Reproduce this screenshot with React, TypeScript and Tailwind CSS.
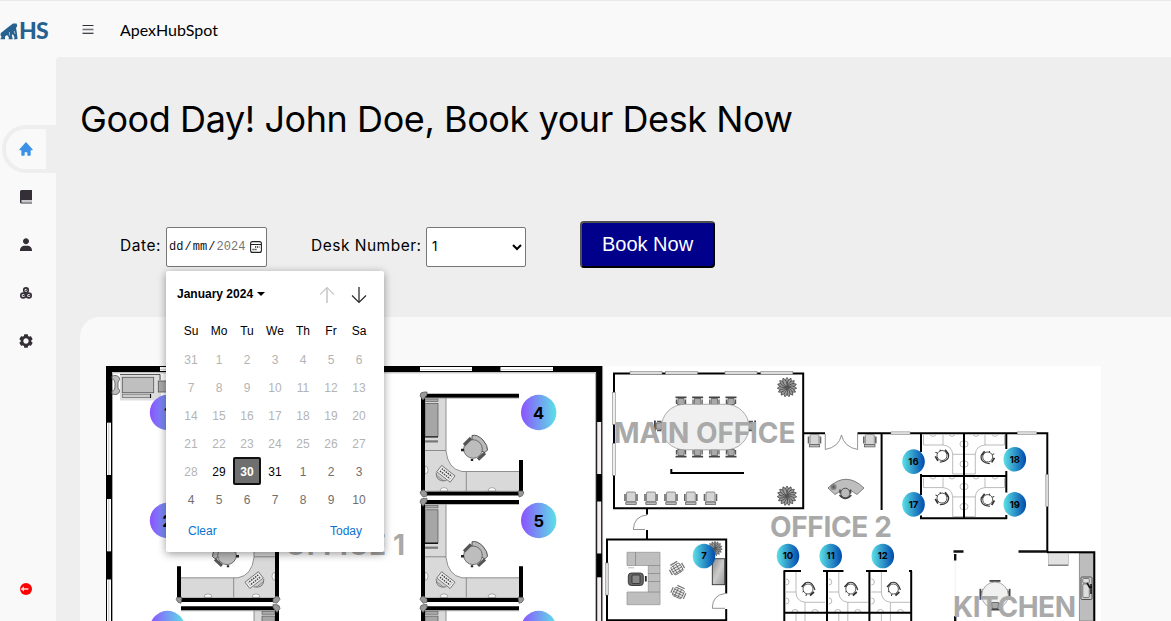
import React from "react";
import { BiSolidHome, BiSolidUser, BiSolidCog } from "react-icons/bi";

const GREY = "#a9a9a9";

function Chair({ x, y, r = 0 }: { x: number; y: number; r?: number }) {
  return (
    <g transform={`translate(${x} ${y}) rotate(${r})`}>
      <path d="M-1 -13.5 Q4 -15 10 -9 Q15 -3 14.5 1 L12 3.5 L8.5 2 Q9 -5 -1 -9Z" fill="#b9b9b9" stroke="#444" strokeWidth="0.9" />
      <circle r="9.3" fill="#bdbdbd" stroke="#555" strokeWidth="0.8" />
      <path d="M-9 -4 L-2 -11" stroke="#555" strokeWidth="3.2" />
      <path d="M5 10.5 L12 4" stroke="#555" strokeWidth="3.2" />
      <path d="M-12 1 l3 0 M-1 12 l0 -2" stroke="#222" strokeWidth="2.4" />
    </g>
  );
}

function Keyboard({ x, y }: { x: number; y: number }) {
  return (
    <g transform={`translate(${x} ${y}) rotate(38)`}>
      <path d="M-8 -4 H9 V4 H-8Z" fill="#eee" stroke="#666" strokeWidth="0.8" />
      <path d="M-6 -1.6 H7 M-6 1.4 H7" stroke="#444" strokeWidth="1.5" strokeDasharray="1.5 1" />
      <path d="M-8 5 Q-2 13 5 5" fill="#ccc" stroke="#777" strokeWidth="0.9" />
      <path d="M-6 7 H3" stroke="#777" strokeWidth="0.7" />
    </g>
  );
}

function Cubicle({ dy = 0, mirror = false }: { dy?: number; mirror?: boolean }) {
  return (
    <g transform={mirror ? `translate(700 ${dy}) scale(-1 1)` : `translate(0 ${dy})`}>
      <path d="M425 398 H446 V451 Q448 469 462 471.5 H519 V491 H425Z" fill="#d9d9d9" />
      <path d="M446 398 V451 Q448 469 462 471.5 H519 M425 450.5 H446 M466.3 471.5 V491" fill="none" stroke="#777" strokeWidth="0.8" />
      <rect x="425" y="399" width="13" height="2.6" fill="#aaa" stroke="#555" strokeWidth="0.6" />
      <rect x="425" y="403.5" width="13" height="33" fill="#a6a6a6" stroke="#555" strokeWidth="0.7" />
      <path d="M425 437 H438" stroke="#000" strokeWidth="1.2" />
      <rect x="421" y="440.3" width="17" height="2.2" fill="#777" />
      <path d="M440 491 a4 3.4 0 0 1 8 0Z M488 491 a4 3.4 0 0 1 8 0Z M425 466 a3 4 0 0 1 0 8Z" fill="#fff" stroke="#777" strokeWidth="0.6" />
      <Keyboard x={445.5} y={473.5} />
      <Chair x={473} y={449} />
      <path d="M424 395.7 H519 M423 396 V493 M424 493.6 H521 M521 460 V493" stroke="#000" strokeWidth="4" />
      <path d="M424 398.2 H519 M424 491.2 H519" stroke="#777" strokeWidth="0.5" />
      <path d="M420 396 q0 -4 4 -4 h3 v3 l-4 5Z M420 493 q0 -3 4 -3 l3 3 v3 l-4 1Z M518 491 h5 q2 2 -1 5 l-3 1Z" fill="#999" stroke="#555" strokeWidth="0.7" />
    </g>
  );
}

function Plant({ x, y, s = 1 }: { x: number; y: number; s?: number }) {
  const leaves = Array.from({ length: 15 }, (_, i) => i * 24);
  return (
    <g transform={`translate(${x} ${y}) scale(${s})`}>
      {leaves.map((a) => (
        <path key={a} d="M0 0 Q-3.4 -6 0 -9.8 Q3.4 -6 0 0Z" transform={`rotate(${a})`} fill="#9c9c9c" stroke="#3c3c3c" strokeWidth="0.7" />
      ))}
      <circle r="1.5" fill="#555" />
    </g>
  );
}

function Seat({ x, y, r = 0 }: { x: number; y: number; r?: number }) {
  return (
    <g transform={`translate(${x} ${y}) rotate(${r})`}>
      <path d="M-5.5 -3.6 H5.5" stroke="#444" strokeWidth="1.8" />
      <path d="M-3 -2.5 H3 L3.5 3.5 H-3.5Z" fill="#aaa" stroke="#555" strokeWidth="0.8" />
      <path d="M-4.6 -1.5 V3 M4.6 -1.5 V3" stroke="#555" strokeWidth="1.2" />
    </g>
  );
}

function Armchair({ x, y }: { x: number; y: number }) {
  return (
    <g transform={`translate(${x} ${y})`}>
      <rect x="-4.5" y="-6" width="9" height="10" rx="1" fill="#d5d5d5" stroke="#777" strokeWidth="0.8" />
      <path d="M-6 -4 V3 M6 -4 V3" stroke="#666" strokeWidth="1.6" />
      <rect x="-5.2" y="4" width="10.4" height="2.4" fill="#bbb" stroke="#555" strokeWidth="0.7" />
    </g>
  );
}

function LineChair({ x, y, r = 0 }: { x: number; y: number; r?: number }) {
  return (
    <g transform={`translate(${x} ${y}) rotate(${r})`} fill="#fff" stroke="#333">
      <path d="M-3 -6 Q4 -9 7 1" strokeWidth="1.1" />
      <circle r="5" strokeWidth="0.8" />
      <path d="M-6.3 -2 L-2.5 -6 M2 6.5 L6 3" strokeWidth="1.7" />
      <path d="M-5.5 3 l1.5 -.8 M-2 7 l.5 -2" strokeWidth="1" />
    </g>
  );
}

function LowerDesk({ x }: { x: number }) {
  return (
    <g fill="none" stroke="#aaa" strokeWidth="0.8">
      <path d={`M${x + 12} 572 V592 H${x + 2} M${x + 12} 592 Q${x + 12} 601 ${x + 21} 602.3 H${x + 41} M${x + 21} 602.3 V612 M${x + 21} 614 V621 M${x + 12} 614 V621`} />
      <path d={`M${x + 2} 579 a3 3 0 0 1 0 6 M${x + 2} 598 a3 3 0 0 1 0 6 M${x + 8} 612 a3 2.5 0 0 1 6 0 M${x + 28} 612 a3 2.5 0 0 1 6 0`} />
      <LineChair x={x + 24} y={589} />
    </g>
  );
}

function UpperDesk({ dy, mirror = false }: { dy: number; mirror?: boolean }) {
  return (
    <g transform={mirror ? `translate(1928 ${dy}) scale(-1 1)` : `translate(0 ${dy})`} fill="none" stroke="#aaa" strokeWidth="0.8">
      <path d="M923.5 435 V445 H943 V435 M943 445 Q952 446 952.7 454.3 H963 M952.7 454.3 V474 H963" />
      <path d="M930 435 q3 3 6 0 M949 435 q3 3 6 0 M963 441 a3 3 0 0 0 0 6 M963 461 a3 3 0 0 0 0 6" />
      {mirror ? <LineChair x={940.3} y={457} r={100} /> : <LineChair x={942} y={455.5} r={100} />}
    </g>
  );
}

function HatchChair({ x, y, r }: { x: number; y: number; r: number }) {
  return (
    <g transform={`translate(${x} ${y}) rotate(${r})`}>
      <rect x="-5" y="-4.5" width="10" height="9" rx="1.5" fill="#eee" stroke="#666" strokeWidth="0.8" />
      <path d="M-5 -2 H5 M-5 0.5 H5 M-5 3 H5 M-2 -4.5 V4.5 M1.5 -4.5 V4.5" stroke="#555" strokeWidth="0.7" />
      <path d="M-4 -6.5 H4 M-7 -3 V3 M7 -3 V3" stroke="#777" strokeWidth="1.2" />
    </g>
  );
}

function Label({ x, y, w, children }: { x: number; y: number; w: number; children: string }) {
  return (
    <text x={x} y={y} textLength={w} fontSize="28" fontWeight="700" fill={GREY} fontFamily="Inter, sans-serif">
      {children}
    </text>
  );
}

const bigDesks = [
  { n: 1, x: 167.5, y: 412.5 },
  { n: 2, x: 167.5, y: 520.5 },
  { n: 3, x: 167.5, y: 628.5 },
  { n: 4, x: 538.7, y: 412.5 },
  { n: 5, x: 538.7, y: 520.5 },
  { n: 6, x: 538.7, y: 628.5 },
];
const smallDesks = [
  { n: 7, x: 704, y: 556 },
  { n: 10, x: 788, y: 556 },
  { n: 11, x: 830.7, y: 556 },
  { n: 12, x: 882.8, y: 556 },
  { n: 16, x: 913.5, y: 461.6 },
  { n: 17, x: 913.5, y: 504.4 },
  { n: 18, x: 1014.8, y: 459.2 },
  { n: 19, x: 1014.8, y: 504.4 },
];

function FloorPlan() {
  return (
    <svg width="995" height="255" viewBox="106 366 995 255" className="block bg-white">
      <defs>
        <linearGradient id="violet">
          <stop offset="0" stopColor="#8c52ff" />
          <stop offset="1" stopColor="#5ce1e6" />
        </linearGradient>
        <linearGradient id="ocean">
          <stop offset="0" stopColor="#5ce1e6" />
          <stop offset="1" stopColor="#004aad" />
        </linearGradient>
        <linearGradient id="steel" x2="1" y2="1">
          <stop offset="0" stopColor="#888" />
          <stop offset="0.5" stopColor="#ccc" />
          <stop offset="1" stopColor="#999" />
        </linearGradient>
      </defs>

      <path d="M109 625 V369 H599.2 V625" fill="none" stroke="#000" strokeWidth="6.2" />
      <path d="M112.5 621 V372.8 H595.6 V621 M602.6 366 V621" fill="none" stroke="#888" strokeWidth="0.7" />
      {[[160, 52], [420, 52], [500.5, 52.5]].map(([x, w]) => (
        <g key={x}>
          <rect x={x} y="367" width={w} height="4" fill="#fff" />
          <path d={`M${x} 369.5 h${w}`} stroke="#ccc" strokeWidth="0.8" />
        </g>
      ))}
      {[[422.7, 52.3], [499, 52.3], [579.5, 50]].map(([y, h]) => (
        <g key={y}>
          <rect x="107" y={y} width="4" height={h} fill="#fff" />
          <path d={`M108.8 ${y} v${h}`} stroke="#aaa" strokeWidth="0.7" />
        </g>
      ))}
      {[[422, 52], [501.5, 52], [577.3, 50]].map(([y, h]) => (
        <rect key={y} x="597.2" y={y} width="4" height={h} fill="#f3eeee" />
      ))}

      <path d="M112 376 q6 -2 8 3 l-2 3 v6 l2 3 q-2 5 -8 3 l0 -3 q3 0 3 -6 q0 -6 -3 -6Z" fill="#bbb" stroke="#555" strokeWidth="0.8" />
      <rect x="120" y="374.5" width="41" height="26" fill="#ddd" />
      <path d="M120 374.5 H160 V380" fill="none" stroke="#333" strokeWidth="0.8" />
      <rect x="122.3" y="377.3" width="31.4" height="15.4" fill="#bfbfbf" stroke="#555" strokeWidth="0.8" />
      <rect x="122.3" y="394.2" width="28" height="3.4" fill="#ccc" stroke="#666" strokeWidth="0.7" />
      <path d="M150.6 394 v4" stroke="#000" strokeWidth="1" />
      <rect x="158.3" y="381" width="10" height="11" fill="#aaa" stroke="#555" strokeWidth="0.8" />

      <Label x={285} y={555.3} w={120}>OFFICE 1</Label>
      <Cubicle />
      <Cubicle dy={106.3} />
      <Cubicle dy={212.6} />
      <Cubicle dy={106.3} mirror />
      <Cubicle dy={212.6} mirror />

      <path d="M614 373.4 H803.2 V508.3 H614Z" fill="none" stroke="#000" strokeWidth="2" />
      {[630, 665.5, 725, 760.8].map((x) => (
        <rect key={x} x={x} y="371.3" width="32" height="3" fill="#ddd" stroke="#888" strokeWidth="0.6" />
      ))}
      {[392.3, 443.3].map((y) => (
        <rect key={y} x="612.3" y={y} width="3" height="32" fill="#eee" stroke="#888" strokeWidth="0.6" />
      ))}
      {[681, 697.6, 714.4, 731].map((x) => (
        <g key={x}>
          <Seat x={x} y={401} />
          <Seat x={x} y={453} r={180} />
        </g>
      ))}
      <Seat x={658.5} y={426} r={-90} />
      <Seat x={751.5} y={426} r={90} />
      <rect x="661.5" y="404.3" width="87.5" height="45.5" rx="23" fill="#f0f0f0" stroke="#999" strokeWidth="0.8" />
      <Label x={613.5} y={443} w={182}>MAIN OFFICE</Label>
      <path d="M671.3 469 V473 H744" fill="none" stroke="#000" strokeWidth="2" />
      <Plant x={787} y={387.2} />
      <Plant x={787} y={495.8} />
      {[631, 651, 671, 690.8, 710.5].map((x) => (
        <Armchair key={x} x={x} y={498} />
      ))}

      <path d="M647 509 V514.5 M647 530 V539" stroke="#000" strokeWidth="2" />
      <path d="M647 515 Q634 516 633.3 529.5 H645" fill="none" stroke="#777" strokeWidth="0.8" />
      <path d="M726.2 593.5 V539.5 H607 V620.2 H726.2 V609" fill="none" stroke="#000" strokeWidth="2" />
      <rect x="605.5" y="563" width="3" height="32" fill="#ddd" stroke="#888" strokeWidth="0.6" />
      <path d="M725 593.5 Q712.5 595 712.3 608.3 H725" fill="none" stroke="#777" strokeWidth="0.8" />
      <path d="M627 552.3 H660 V604.7 H627 V592 H648.3 V565.5 H627Z" fill="#bebebe" stroke="#999" strokeWidth="0.8" />
      <path d="M635.5 552 V565.5 M648.3 565.5 H660 M648.3 573.5 H660 M648.3 581.5 H660 M648.3 592 H660" stroke="#888" strokeWidth="0.8" />
      <path d="M628 567.8 H634" stroke="#bbb" strokeWidth="1" />
      <rect x="628.3" y="573" width="15" height="12.5" rx="3" fill="#666" stroke="#333" strokeWidth="0.9" />
      <rect x="632" y="575" width="8" height="8.5" rx="1" fill="#888" stroke="#222" strokeWidth="0.7" />
      <path d="M645.8 576 V581.5" stroke="#222" strokeWidth="1.8" />
      <HatchChair x={677} y={569} r={-30} />
      <HatchChair x={678.3} y={593} r={25} />
      <Plant x={715} y={548.5} s={0.75} />
      <rect x="712.3" y="558.7" width="12.4" height="26" fill="url(#steel)" stroke="#333" strokeWidth="0.9" />

      <path d="M803.5 433.3 H825 M857.5 433.3 H1047.3 V552.3 M881.6 433 V510" fill="none" stroke="#000" strokeWidth="2" />
      <path d="M825.3 434 V449.5 Q839 447 841.5 435 Q844 447 857.6 449.5 V434" fill="none" stroke="#777" strokeWidth="0.8" />
      <Armchair x={814.5} y={440.5} />
      <Armchair x={869.8} y={440.5} />
      <path d="M828 488 Q846 470.5 864 488 L857 494.5 Q846 485 835 494.5Z" fill="#bebebe" stroke="#666" strokeWidth="0.8" />
      <Plant x={833.5} y={487} s={0.32} />
      <ellipse cx="845.3" cy="493" rx="4.6" ry="4.8" fill="#bbb" stroke="#444" strokeWidth="0.9" />
      <path d="M839.5 495 Q845.3 502 851.3 495 M840 489.5 v4 M850.6 489.5 v4" fill="none" stroke="#444" strokeWidth="1.5" />
      {[[891, 431.8, 19], [1017.5, 431.8, 19]].map(([x, y, w]) => (
        <rect key={x} x={x} y={y} width={w} height="2.8" fill="#ddd" stroke="#999" strokeWidth="0.6" />
      ))}
      <rect x="1045.8" y="474.5" width="2.8" height="32" fill="#ddd" stroke="#888" strokeWidth="0.6" />
      <Label x={770} y={537} w={122}>OFFICE 2</Label>

      <UpperDesk dy={0} />
      <UpperDesk dy={0} mirror />
      <UpperDesk dy={42.6} />
      <UpperDesk dy={42.6} mirror />
      <path d="M921 433 V452 M921 474 V495 M921 515.5 V519 M964 433 V519 M1006.3 433 V449 M1006.3 471 V492.5 M1006.3 515 V519 M920 476 H1007 M920 518.3 H1007" stroke="#000" strokeWidth="2" />

      <LowerDesk x={784} />
      <LowerDesk x={826.8} />
      <LowerDesk x={869.4} />
      <path d="M784.3 571 V621 M827 571 V621 M869.4 571 V621 M911.2 571 V621 M783.5 612.8 H911.5 M783.5 571 H801 M823 571 H843.5 M866 571 H887 M909 571 H912" stroke="#000" strokeWidth="2" />

      <path d="M953.5 551.5 H963.5 M955.2 554 V560.5 M1018.5 551.5 H1047 M955.2 616 V621" stroke="#111" strokeWidth="2.4" />
      <path d="M955.2 561 V616" stroke="#eee" strokeWidth="0.8" />
      <rect x="1079.3" y="553" width="14" height="68" fill="#bdbdbd" stroke="#777" strokeWidth="0.7" />
      <path d="M1047 552.3 H1094.3 V625" fill="none" stroke="#000" strokeWidth="2" />
      <rect x="1048.3" y="553.5" width="20" height="11" fill="#e2e2e2" stroke="#aaa" strokeWidth="0.6" />
      <path d="M1048 565.3 H1068.5" stroke="#666" strokeWidth="1" />
      <rect x="1081" y="577" width="11" height="22.5" rx="1.2" fill="#ccc" stroke="#444" strokeWidth="0.9" />
      <rect x="1082.8" y="578.5" width="6.5" height="4.5" rx="1" fill="#ddd" stroke="#555" strokeWidth="0.7" />
      <rect x="1082.8" y="584" width="6.5" height="13.5" rx="1" fill="#ddd" stroke="#555" strokeWidth="0.7" />
      <path d="M1091 584 v10 M1087 583 l3 5 M1089 587 h3" stroke="#111" strokeWidth="1.5" />
      <Seat x={995} y={584.5} />
      <Seat x={984} y={594.3} r={-90} />
      <Seat x={1006} y={594.3} r={90} />
      <circle cx="995" cy="595.3" r="13.3" fill="#f0f0f0" stroke="#999" strokeWidth="0.8" />
      <Seat x={995} y={606} r={180} />
      <Label x={953} y={617} w={123}>KITCHEN</Label>

      {bigDesks.map((d) => (
        <g key={d.n}>
          <circle cx={d.x} cy={d.y} r="17.7" fill="url(#violet)" />
          <text x={d.x} y={d.y + 6} textAnchor="middle" fontSize="16.5" fontWeight="700" fontFamily="Inter, sans-serif">{d.n}</text>
        </g>
      ))}
      {smallDesks.map((d) => (
        <g key={d.n}>
          <ellipse cx={d.x} cy={d.y} rx="11.3" ry="12.3" fill="url(#ocean)" />
          <text x={d.x} y={d.y + 3.4} textAnchor="middle" fontSize="9.5" fontWeight="700" fontFamily="Inter, sans-serif">{d.n}</text>
        </g>
      ))}
    </svg>
  );
}

const weekdays = ["Su", "Mo", "Tu", "We", "Th", "Fr", "Sa"];
const days = [31, ...Array.from({ length: 31 }, (_, i) => i + 1), ...Array.from({ length: 10 }, (_, i) => i + 1)];

function dayClass(i: number) {
  if (i === 30) return "rounded-[2px] border-2 border-[#101010] bg-[#6f6f6f] pt-[2px] font-bold text-white";
  if (i < 29) return "pt-[2px] text-[#b4b4b4]";
  if (i > 31) return "pt-[2px] text-[#707070]";
  return "pt-[2px] text-black";
}

function Calendar() {
  return (
    <div className="absolute left-[46px] top-[44px] z-10 h-[281px] w-[218px] rounded-[2px] bg-white font-['Liberation_Sans',sans-serif] text-[12px] leading-none text-black shadow-[0_2px_8px_rgba(0,0,0,0.4)]">
      <div className="flex h-[46px] items-center pl-[11px] pr-[17px]">
        <span className="whitespace-nowrap font-bold">January 2024</span>
        <span className="ml-1 border-x-4 border-t-4 border-x-transparent border-t-black" />
        <svg width="48" height="18" viewBox="0 0 48 18" className="ml-auto mt-[2px]" fill="none">
          <path d="M8 17 V2" stroke="#c8c8c8" strokeWidth="1.6" />
          <path d="M1 8.5 L8 1.5 L15 8.5" stroke="#c8c8c8" strokeWidth="1.1" />
          <path d="M40 1 V16" stroke="#555" strokeWidth="1.6" />
          <path d="M33 9.5 L40 16.5 L47 9.5" stroke="#222" strokeWidth="1.1" />
        </svg>
      </div>
      <div className="grid grid-cols-7 px-[11px]">
        {weekdays.map((d) => (
          <div key={d} className="flex h-7 items-center justify-center">{d}</div>
        ))}
      </div>
      <div className="grid grid-cols-7 px-[11px]">
        {days.map((d, i) => (
          <div key={i} className={`flex h-7 items-center justify-center ${dayClass(i)}`}>{d}</div>
        ))}
      </div>
      <div className="flex justify-between px-[22px] pt-[12px] text-[#0a73cf]">
        <span>Clear</span>
        <span>Today</span>
      </div>
    </div>
  );
}

function Logo() {
  return (
    <div className="flex h-[58px] items-center text-[#27618f]">
      <svg width="18" height="17" viewBox="0 0 18 17" className="mt-[2px]" fill="currentColor">
        <path d="M0.8 10 L4 7.5 L9 3.5 L13 0.6 L16.5 0.5 L17.3 3 L16 5 L16.6 8 L17.6 16 L14.2 16.5 L14.4 14 L12.8 11 L11.8 12.5 L12.8 16.3 L8.5 16.3 L9 14.5 L7 12 L5 13.5 L5 16.3 L0.3 16.3 L1.5 14 L0.5 12Z" />
        <path d="M9.5 9 L9.3 12.5 M14.2 8 L15 11" stroke="#f9f9f9" strokeWidth="0.6" fill="none" />
      </svg>
      <span className="ml-[1px] font-['Lato',sans-serif] text-[23px] font-black leading-none tracking-[-0.8px]">HS</span>
    </div>
  );
}

function BookIcon() {
  return (
    <svg width="12" height="14" viewBox="0 0 12 14">
      <path d="M1.5 0 H12 V10.5 H1.5 V11.5 H12 V13.5 H1.5 Q0 13.5 0 12 V1.5 Q0 0 1.5 0Z" fill="#342e37" />
      <path d="M1.5 11 H12" stroke="#f9f9f9" strokeWidth="1.1" />
      <path d="M1.5 12.7 H12" stroke="#99959b" strokeWidth="1.6" />
    </svg>
  );
}

function CirclesIcon() {
  return (
    <svg width="12" height="12" viewBox="0 0 12 12" fill="none" stroke="#342e37" strokeWidth="1.6">
      <circle cx="6" cy="3.2" r="2.3" />
      <circle cx="3.2" cy="8.5" r="2.4" />
      <circle cx="8.8" cy="8.5" r="2.4" />
      <path d="M5.4 3.7 L7.6 2.6 M2.6 9 L4.6 8 M8.2 9 L10.3 8" strokeWidth="1.1" />
    </svg>
  );
}

function NavItem({ children }: { children: React.ReactNode }) {
  return <li className="flex h-12 w-[52px] items-center justify-center text-base text-[#342e37]">{children}</li>;
}

function Sidebar() {
  return (
    <aside className="flex w-14 shrink-0 flex-col">
      <Logo />
      <ul className="mt-[66px]">
        <li className="ml-[2px] h-12 rounded-l-[24px] bg-[#eeeeee] py-1 pl-1 pr-[10px]">
          <div className="flex h-10 items-center rounded-l-[20px] bg-[#f9f9f9] pl-3 text-base text-[#3c91e6]">
            <BiSolidHome />
          </div>
        </li>
        <NavItem><BookIcon /></NavItem>
        <NavItem><BiSolidUser /></NavItem>
        <NavItem><CirclesIcon /></NavItem>
        <NavItem><BiSolidCog className="text-base" /></NavItem>
      </ul>
      <div className="mt-auto flex h-16 w-[52px] items-center justify-center">
        <svg width="12" height="12" viewBox="0 0 12 12">
          <circle cx="6" cy="6" r="6" fill="#ff0000" />
          <path d="M0.5 6 L4 3.4 V5.3 H8.4 V6.7 H4 V8.6Z" fill="#fff" fillOpacity="0.85" />
        </svg>
      </div>
    </aside>
  );
}

export default function App() {
  return (
    <div className="flex h-[621px] w-[1171px] overflow-hidden border-t border-[#eaeaea] bg-[#f9f9f9] text-black">
      <Sidebar />
      <div className="flex min-w-0 flex-1 flex-col">
        <nav className="flex h-14 shrink-0 items-center pl-[26px]">
          <svg width="12" height="9" viewBox="0 0 12 9">
            <path d="M0.5 0.5 H11.5" stroke="#342e37" strokeWidth="1" />
            <path d="M0.5 4.5 H11.5" stroke="#77727a" strokeWidth="1.6" />
            <path d="M0.5 8.3 H11.5" stroke="#342e37" strokeWidth="1.2" />
          </svg>
          <span className="ml-[26px] mt-[1px] font-['Lato',sans-serif] text-[16px] text-black">ApexHubSpot</span>
        </nav>
        <main className="flex min-h-0 flex-1 flex-col rounded-tl-[4px] bg-[#eeeeee] pl-6">
          <h1 className="mt-[35px] mb-px h-[54px] whitespace-nowrap font-['Inter',sans-serif] text-[36px] font-normal leading-[54px] tracking-[-0.42px]">
            Good Day! John Doe, Book your Desk Now
          </h1>
          <form className="mt-[74px] flex h-12 items-start pl-10 font-['Inter',sans-serif] text-[16px]">
            <div className="relative mt-[6px] flex h-10 items-center">
              <span className="mb-[2px] w-[46px] whitespace-nowrap text-[15.5px] tracking-[0.55px]">Date:</span>
              <div className="flex h-10 w-[101px] items-center rounded-[2px] border border-[#767676] bg-white pl-[2px] font-['Liberation_Mono',monospace] text-[12px]">
                <span className="text-[#111]">dd</span>
                <span className="w-[9.4px] text-center text-[#111]">/</span>
                <span className="text-[#111]">mm</span>
                <span className="w-[9.4px] text-center text-[#111]">/</span>
                <span className="text-[#757575]">2024</span>
                <svg width="12" height="12" viewBox="0 0 12 12" className="ml-[5px]" fill="none" stroke="#222">
                  <rect x="0.6" y="0.6" width="10.8" height="10.8" rx="2" strokeWidth="1.1" />
                  <path d="M1 3.5 H11" strokeWidth="1" />
                  <path d="M5 6 h4.5 M2.5 8.5 h4.5" strokeWidth="1.3" strokeDasharray="1.2 0.8" />
                </svg>
              </div>
              <Calendar />
            </div>
            <div className="ml-11 mt-[6px] flex h-10 items-center">
              <span className="mb-[2px] w-[115px] whitespace-nowrap text-[15.5px] tracking-[0.5px]">Desk Number:</span>
              <div className="flex h-10 w-[100px] items-center justify-between rounded-[2px] border border-[#767676] bg-white pl-[5px] pr-[3px] text-[13.3px]">
                <span>1</span>
                <svg width="10" height="7" viewBox="0 0 10 7" fill="none" stroke="#000" strokeWidth="2">
                  <path d="M1 1 L5 5 L9 1" />
                </svg>
              </div>
            </div>
            <button type="button" className="ml-[54px] h-[47px] w-[135px] rounded-[4px] border-2 border-b-black border-l-[#505050] border-r-black border-t-[#505050] bg-[#00008b] pb-[2px] font-['Liberation_Sans',sans-serif] text-[20px] leading-none text-white">
              Book Now
            </button>
          </form>
          <section className="mt-12 flex-1 overflow-hidden rounded-tl-[20px] bg-[#f9f9f9] pl-[26px] pt-[49px]">
            <FloorPlan />
          </section>
        </main>
      </div>
    </div>
  );
}
